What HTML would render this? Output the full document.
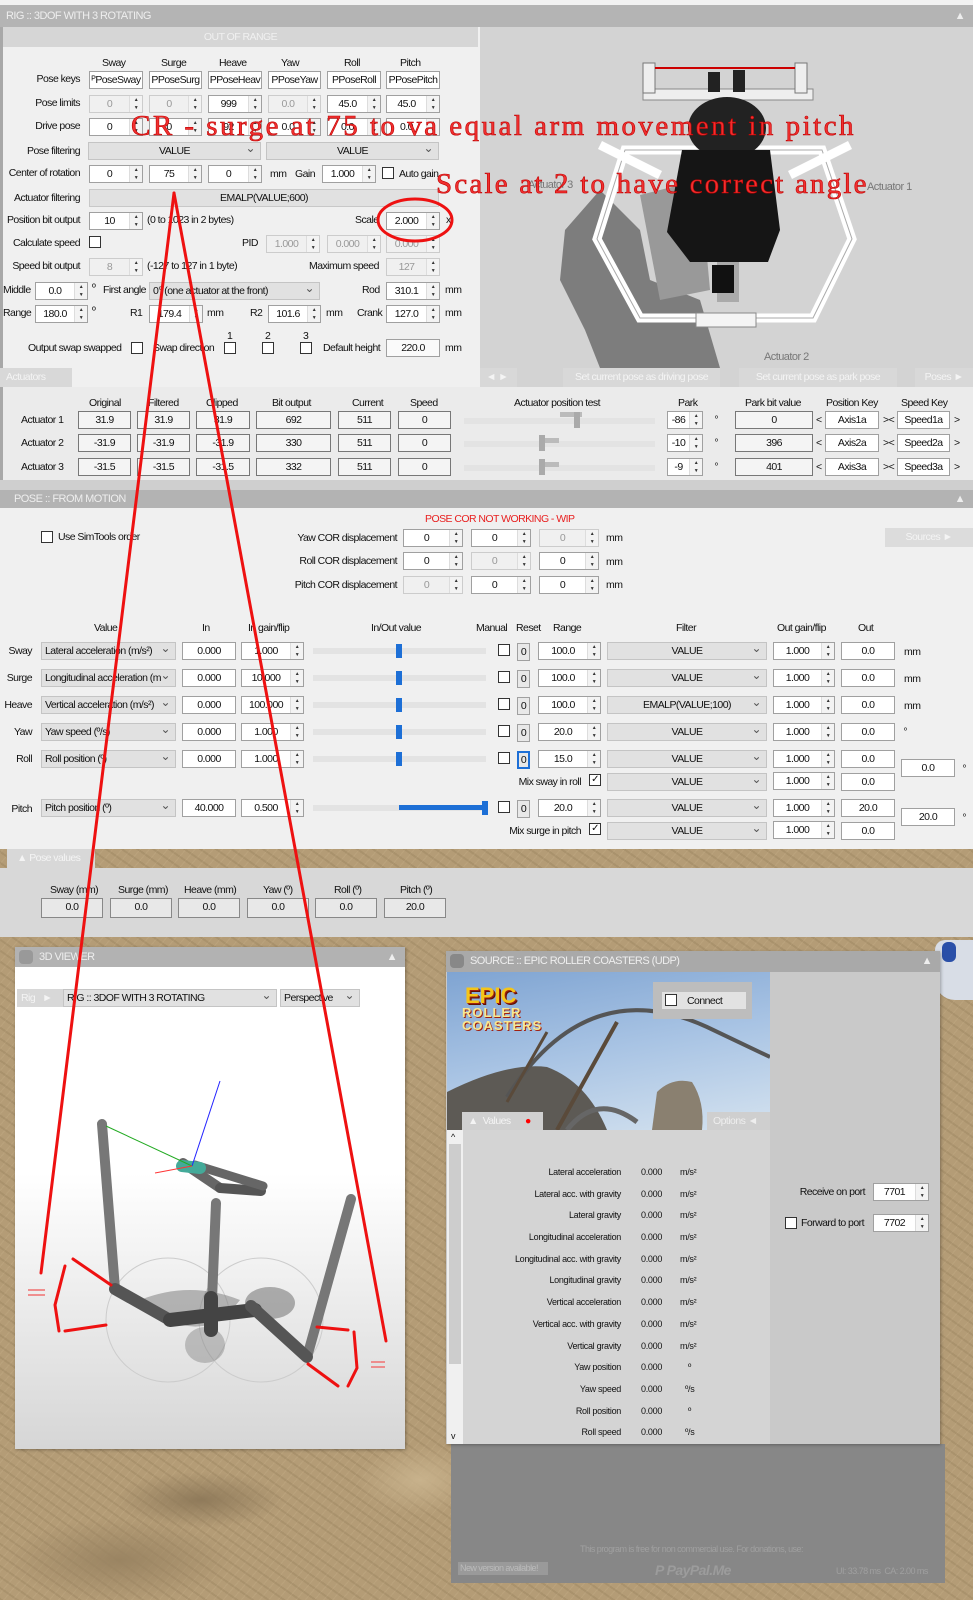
<!DOCTYPE html>
<html><head><meta charset="utf-8">
<style>
*{box-sizing:border-box;margin:0;padding:0}
body{width:973px;height:1600px;position:relative;overflow:hidden;font-family:"Liberation Sans",sans-serif;font-size:10.5px;color:#111;letter-spacing:-0.55px;
background:#b49c76;
background-image:radial-gradient(ellipse 120px 40px at 200px 1500px,#8f7a5a 0,transparent 70%),radial-gradient(ellipse 160px 60px at 120px 1560px,#9a8462 0,transparent 70%),radial-gradient(ellipse 90px 50px at 420px 1480px,#c8b28c 0,transparent 70%),repeating-linear-gradient(35deg,rgba(90,70,40,.12) 0 2px,transparent 2px 9px),repeating-linear-gradient(-50deg,rgba(230,210,170,.12) 0 1px,transparent 1px 7px);}
.a{position:absolute}
.l{position:absolute;white-space:nowrap;line-height:13px}
.r{position:absolute;white-space:nowrap;line-height:13px;text-align:right}
.tb{position:absolute;background:#fff;border:1px solid #a0a0a0;height:18px;line-height:16px;text-align:center;white-space:nowrap;overflow:hidden}
.sp{padding-right:13px}
.sp:after{content:"▲\A▼";white-space:pre;position:absolute;right:0;top:0;width:12px;height:16px;border-left:1px solid #ddd;background:#f3f3f3;font-size:5px;line-height:8px;text-align:center;color:#333}
.dis{background:#f0f0f0;color:#999;border-color:#ccc}
.dd{position:absolute;background:#e1e1e1;border:1px solid #c4c4c4;height:18px;line-height:16px;text-align:center;white-space:nowrap;overflow:hidden}
.dd:after{content:"⌄";position:absolute;right:5px;top:-3px;font-size:12px;color:#555}
.ddl{text-align:left;padding-left:3px}
.cb{position:absolute;width:12px;height:12px;border:1px solid #333;background:#fff}
.bar{position:absolute;background:#b3b3b3;color:#eee;font-size:11px;line-height:18px}
.sl{position:absolute;height:6px;background:#e3e3e3}
.th{position:absolute;width:6px;height:14px;background:#1d6fd6}
.tab{position:absolute;background:#d8d8d8;color:#f4f4f4;line-height:18px;padding-left:6px}
</style></head><body>

<!-- RIG panel -->
<div class="a" style="left:0;top:0;width:973px;height:5px;background:#f2f2f2"></div>
<div class="bar" style="left:0;top:5px;width:973px;height:22px;background:#b4b4b4;line-height:22px;padding-left:6px">RIG :: 3DOF WITH 3 ROTATING<span style="position:absolute;right:8px">▲</span></div>
<div class="a" style="left:0;top:27px;width:480px;height:341px;background:#f0f0f0"></div>
<div class="a" style="left:0;top:27px;width:3px;height:460px;background:#a8a8a8"></div>
<div class="a" style="left:3px;top:27px;width:475px;height:20px;background:#d6d6d6;color:#f0f0f0;text-align:center;line-height:20px">OUT OF RANGE</div>

<div class="l" style="left:102px;top:57px">Sway</div><div class="l" style="left:161px;top:57px">Surge</div><div class="l" style="left:219px;top:57px">Heave</div><div class="l" style="left:281px;top:57px">Yaw</div><div class="l" style="left:344px;top:57px">Roll</div><div class="l" style="left:400px;top:57px">Pitch</div>

<div class="r" style="right:893px;top:73px">Pose keys</div>
<div class="tb" style="left:89px;top:71px;width:54px">ᴾPoseSway</div><div class="tb" style="left:149px;top:71px;width:53px">PPoseSurg</div><div class="tb" style="left:208px;top:71px;width:54px">PPoseHeav</div><div class="tb" style="left:268px;top:71px;width:53px">PPoseYaw</div><div class="tb" style="left:327px;top:71px;width:54px">PPoseRoll</div><div class="tb" style="left:386px;top:71px;width:54px">PPosePitch</div>

<div class="r" style="right:893px;top:97px">Pose limits</div>
<div class="tb sp dis" style="left:89px;top:95px;width:54px">0</div><div class="tb sp dis" style="left:149px;top:95px;width:53px">0</div><div class="tb sp" style="left:208px;top:95px;width:54px">999</div><div class="tb sp dis" style="left:268px;top:95px;width:53px">0.0</div><div class="tb sp" style="left:327px;top:95px;width:54px">45.0</div><div class="tb sp" style="left:386px;top:95px;width:54px">45.0</div>

<div class="r" style="right:893px;top:120px">Drive pose</div>
<div class="tb sp" style="left:89px;top:118px;width:54px">0</div><div class="tb sp" style="left:149px;top:118px;width:53px">0</div><div class="tb sp" style="left:208px;top:118px;width:54px">92</div><div class="tb sp" style="left:268px;top:118px;width:53px">0.0</div><div class="tb sp" style="left:327px;top:118px;width:54px">0.0</div><div class="tb sp" style="left:386px;top:118px;width:54px">0.0</div>

<div class="r" style="right:893px;top:145px">Pose filtering</div>
<div class="dd" style="left:88px;top:142px;width:173px">VALUE</div><div class="dd" style="left:266px;top:142px;width:173px">VALUE</div>

<div class="r" style="right:893px;top:167px">Center of rotation</div>
<div class="tb sp" style="left:89px;top:165px;width:54px">0</div><div class="tb sp" style="left:149px;top:165px;width:53px">75</div><div class="tb sp" style="left:208px;top:165px;width:54px">0</div>
<div class="l" style="left:270px;top:168px">mm</div><div class="l" style="left:295px;top:168px">Gain</div>
<div class="tb sp" style="left:322px;top:165px;width:54px">1.000</div><div class="cb" style="left:382px;top:167px"></div><div class="l" style="left:399px;top:168px">Auto gain</div>

<div class="r" style="right:893px;top:192px">Actuator filtering</div>
<div class="a" style="left:89px;top:189px;width:350px;height:18px;background:#e1e1e1;border:1px solid #c8c8c8;text-align:center;line-height:16px">EMALP(VALUE;600)</div>

<div class="r" style="right:893px;top:214px">Position bit output</div>
<div class="tb sp" style="left:89px;top:212px;width:54px">10</div><div class="l" style="left:147px;top:214px">(0 to 1023 in 2 bytes)</div>
<div class="l" style="left:355px;top:214px">Scale</div><div class="tb sp" style="left:386px;top:212px;width:54px">2.000</div><div class="l" style="left:446px;top:214px">x</div>

<div class="r" style="right:893px;top:237px">Calculate speed</div><div class="cb" style="left:89px;top:236px"></div>
<div class="l" style="left:242px;top:237px">PID</div>
<div class="tb sp dis" style="left:266px;top:235px;width:54px">1.000</div><div class="tb sp dis" style="left:327px;top:235px;width:54px">0.000</div><div class="tb sp dis" style="left:386px;top:235px;width:54px">0.000</div>

<div class="r" style="right:893px;top:260px">Speed bit output</div>
<div class="tb sp dis" style="left:89px;top:258px;width:54px">8</div><div class="l" style="left:147px;top:260px">(-127 to 127 in 1 byte)</div>
<div class="l" style="left:309px;top:260px">Maximum speed</div><div class="tb sp dis" style="left:386px;top:258px;width:54px">127</div>

<div class="l" style="left:3px;top:284px">Middle</div><div class="tb sp" style="left:35px;top:282px;width:53px">0.0</div><div class="l" style="left:92px;top:282px">º</div>
<div class="l" style="left:103px;top:284px">First angle</div><div class="dd ddl" style="left:149px;top:282px;width:171px">0° (one actuator at the front)</div>
<div class="l" style="left:362px;top:284px">Rod</div><div class="tb sp" style="left:386px;top:282px;width:54px">310.1</div><div class="l" style="left:445px;top:284px">mm</div>

<div class="l" style="left:3px;top:307px">Range</div><div class="tb sp" style="left:35px;top:305px;width:53px">180.0</div><div class="l" style="left:92px;top:305px">º</div>
<div class="l" style="left:130px;top:307px">R1</div><div class="tb sp" style="left:149px;top:305px;width:54px">179.4</div><div class="l" style="left:207px;top:307px">mm</div>
<div class="l" style="left:250px;top:307px">R2</div><div class="tb sp" style="left:268px;top:305px;width:53px">101.6</div><div class="l" style="left:326px;top:307px">mm</div>
<div class="l" style="left:357px;top:307px">Crank</div><div class="tb sp" style="left:386px;top:305px;width:54px">127.0</div><div class="l" style="left:445px;top:307px">mm</div>

<div class="l" style="left:227px;top:330px">1</div><div class="l" style="left:265px;top:330px">2</div><div class="l" style="left:303px;top:330px">3</div>
<div class="l" style="left:28px;top:342px">Output swap swapped</div><div class="cb" style="left:131px;top:342px"></div>
<div class="l" style="left:153px;top:342px">Swap direction</div><div class="cb" style="left:224px;top:342px"></div><div class="cb" style="left:262px;top:342px"></div><div class="cb" style="left:300px;top:342px"></div>
<div class="l" style="left:323px;top:342px">Default height</div><div class="tb" style="left:386px;top:339px;width:54px;background:#fafafa">220.0</div><div class="l" style="left:445px;top:342px">mm</div>

<!-- 3D render -->
<div class="a" style="left:480px;top:27px;width:493px;height:341px;background:#d3d3d3;overflow:hidden">
<svg width="493" height="341" viewBox="480 27 493 341">
<path d="M600 190 L565 230 L560 280 L585 330 L600 368 L720 368 L700 300 L650 280 L640 230 Z" fill="#7d7d7d"/>
<path d="M640 195 L700 180 L710 290 L660 300 Z" fill="#999"/>
<polygon points="625,150 822,150 852,239 813,318 640,318 597,239" fill="none" stroke="#fff" stroke-width="9"/>
<polygon points="625,150 822,150 852,239 813,318 640,318 597,239" fill="none" stroke="#aaa" stroke-width="1"/>
<rect x="643" y="89" width="170" height="11" fill="#eee" stroke="#888"/>
<rect x="643" y="63" width="12" height="30" fill="#eee" stroke="#777"/><rect x="795" y="63" width="12" height="30" fill="#eee" stroke="#777"/>
<line x1="655" y1="68" x2="795" y2="68" stroke="#c00" stroke-width="2"/>
<rect x="708" y="72" width="12" height="20" fill="#222"/><rect x="733" y="70" width="12" height="22" fill="#222"/>
<line x1="600" y1="145" x2="660" y2="175" stroke="#fff" stroke-width="9"/><line x1="850" y1="145" x2="790" y2="175" stroke="#fff" stroke-width="9"/>
<ellipse cx="727" cy="128" rx="39" ry="31" fill="#222"/>
<path d="M682 150 L770 150 L780 230 L768 262 L690 262 L667 232 Z" fill="#151515"/>
<rect x="717" y="262" width="22" height="40" fill="#aaa"/>
<rect x="712" y="265" width="22" height="28" fill="#111"/>
<rect x="696" y="313" width="60" height="14" fill="#f4f4f4" stroke="#888"/>
<text x="867" y="190" fill="#777" font-size="11" font-family="Liberation Sans">Actuator 1</text>
<text x="764" y="360" fill="#777" font-size="11" font-family="Liberation Sans">Actuator 2</text>
<text x="528" y="188" fill="#777" font-size="11" font-family="Liberation Sans">Actuator 3</text>
</svg></div>

<!-- Actuators bar -->
<div class="a" style="left:0;top:368px;width:480px;height:19px;background:#f0f0f0"></div>
<div class="tab" style="left:0;top:368px;width:72px;height:19px">Actuators</div>
<div class="a" style="left:480px;top:368px;width:493px;height:19px;background:#d3d3d3"></div>
<div class="tab" style="left:480px;top:368px;width:37px;height:19px">◄ ►</div>
<div class="tab" style="left:563px;top:368px;width:157px;height:19px;text-align:center;padding:0">Set current pose as driving pose</div>
<div class="tab" style="left:739px;top:368px;width:158px;height:19px;text-align:center;padding:0">Set current pose as park pose</div>
<div class="tab" style="left:915px;top:368px;width:58px;height:19px;text-align:center;padding:0">Poses ►</div>
<div class="a" style="left:3px;top:387px;width:970px;height:93px;background:#ebebeb"></div>

<div class="l" style="left:89px;top:397px">Original</div><div class="l" style="left:148px;top:397px">Filtered</div><div class="l" style="left:206px;top:397px">Clipped</div><div class="l" style="left:272px;top:397px">Bit output</div><div class="l" style="left:352px;top:397px">Current</div><div class="l" style="left:410px;top:397px">Speed</div>
<div class="l" style="left:514px;top:397px">Actuator position test</div><div class="l" style="left:678px;top:397px">Park</div><div class="l" style="left:745px;top:397px">Park bit value</div><div class="l" style="left:826px;top:397px">Position Key</div><div class="l" style="left:901px;top:397px">Speed Key</div>

<div class="l" style="left:21px;top:414px">Actuator 1</div><div class="l" style="left:21px;top:437px">Actuator 2</div><div class="l" style="left:21px;top:461px">Actuator 3</div>
<div class="tb" style="left:78px;top:411px;width:53px;background:#f4f4f4;border-color:#777">31.9</div><div class="tb" style="left:137px;top:411px;width:53px;background:#f4f4f4;border-color:#777">31.9</div><div class="tb" style="left:196px;top:411px;width:54px;background:#f4f4f4;border-color:#777">31.9</div><div class="tb" style="left:256px;top:411px;width:75px;background:#f4f4f4;border-color:#777">692</div><div class="tb" style="left:338px;top:411px;width:53px;background:#f4f4f4;border-color:#777">511</div><div class="tb" style="left:398px;top:411px;width:53px;background:#f4f4f4;border-color:#777">0</div>
<div class="tb" style="left:78px;top:434px;width:53px;background:#f4f4f4;border-color:#777">-31.9</div><div class="tb" style="left:137px;top:434px;width:53px;background:#f4f4f4;border-color:#777">-31.9</div><div class="tb" style="left:196px;top:434px;width:54px;background:#f4f4f4;border-color:#777">-31.9</div><div class="tb" style="left:256px;top:434px;width:75px;background:#f4f4f4;border-color:#777">330</div><div class="tb" style="left:338px;top:434px;width:53px;background:#f4f4f4;border-color:#777">511</div><div class="tb" style="left:398px;top:434px;width:53px;background:#f4f4f4;border-color:#777">0</div>
<div class="tb" style="left:78px;top:458px;width:53px;background:#f4f4f4;border-color:#777">-31.5</div><div class="tb" style="left:137px;top:458px;width:53px;background:#f4f4f4;border-color:#777">-31.5</div><div class="tb" style="left:196px;top:458px;width:54px;background:#f4f4f4;border-color:#777">-31.5</div><div class="tb" style="left:256px;top:458px;width:75px;background:#f4f4f4;border-color:#777">332</div><div class="tb" style="left:338px;top:458px;width:53px;background:#f4f4f4;border-color:#777">511</div><div class="tb" style="left:398px;top:458px;width:53px;background:#f4f4f4;border-color:#777">0</div>
<div class="sl" style="left:464px;top:418px;width:191px"></div><div class="a" style="left:560px;top:412px;width:22px;height:5px;background:#bbb"></div><div class="a" style="left:574px;top:412px;width:6px;height:16px;background:#aaa"></div>
<div class="sl" style="left:464px;top:441px;width:191px"></div><div class="a" style="left:539px;top:438px;width:20px;height:5px;background:#bbb"></div><div class="a" style="left:539px;top:435px;width:6px;height:16px;background:#aaa"></div>
<div class="sl" style="left:464px;top:465px;width:191px"></div><div class="a" style="left:539px;top:462px;width:20px;height:5px;background:#bbb"></div><div class="a" style="left:539px;top:459px;width:6px;height:16px;background:#aaa"></div>
<div class="tb sp" style="left:667px;top:411px;width:36px">-86</div><div class="l" style="left:715px;top:412px;font-size:8px">º</div><div class="tb sp" style="left:667px;top:434px;width:36px">-10</div><div class="l" style="left:715px;top:435px;font-size:8px">º</div><div class="tb sp" style="left:667px;top:458px;width:36px">-9</div><div class="l" style="left:715px;top:459px;font-size:8px">º</div>
<div class="tb" style="left:735px;top:411px;width:78px;background:#f4f4f4;border-color:#777">0</div><div class="tb" style="left:735px;top:434px;width:78px;background:#f4f4f4;border-color:#777">396</div><div class="tb" style="left:735px;top:458px;width:78px;background:#f4f4f4;border-color:#777">401</div>
<div class="l" style="left:816px;top:414px">&lt;</div><div class="l" style="left:816px;top:437px">&lt;</div><div class="l" style="left:816px;top:461px">&lt;</div>
<div class="tb" style="left:825px;top:411px;width:54px">Axis1a</div><div class="tb" style="left:825px;top:434px;width:54px">Axis2a</div><div class="tb" style="left:825px;top:458px;width:54px">Axis3a</div>
<div class="l" style="left:883px;top:414px">&gt;&lt;</div><div class="l" style="left:883px;top:437px">&gt;&lt;</div><div class="l" style="left:883px;top:461px">&gt;&lt;</div>
<div class="tb" style="left:897px;top:411px;width:53px">Speed1a</div><div class="tb" style="left:897px;top:434px;width:53px">Speed2a</div><div class="tb" style="left:897px;top:458px;width:53px">Speed3a</div>
<div class="l" style="left:954px;top:414px">&gt;</div><div class="l" style="left:954px;top:437px">&gt;</div><div class="l" style="left:954px;top:461px">&gt;</div>
<div class="a" style="left:0;top:480px;width:973px;height:10px;background:#cfcfcf"></div>

<!-- POSE -->
<div class="bar" style="left:0;top:490px;width:973px;height:18px;padding-left:14px">POSE :: FROM MOTION<span style="position:absolute;right:8px">▲</span></div>
<div class="a" style="left:0;top:508px;width:973px;height:341px;background:#f0f0f0"></div>
<div class="l" style="left:425px;top:513px;color:#e82020">POSE COR NOT WORKING - WIP</div>
<div class="cb" style="left:41px;top:531px"></div><div class="l" style="left:58px;top:531px">Use SimTools order</div>
<div class="a" style="left:885px;top:528px;width:88px;height:19px;background:#dcdcdc;color:#f4f4f4;text-align:center;line-height:19px">Sources ►</div>
<div class="r" style="right:576px;top:532px">Yaw COR displacement</div><div class="r" style="right:576px;top:555px">Roll COR displacement</div><div class="r" style="right:576px;top:579px">Pitch COR displacement</div>
<div class="tb sp" style="left:403px;top:529px;width:60px">0</div><div class="tb sp" style="left:471px;top:529px;width:60px">0</div><div class="tb sp dis" style="left:539px;top:529px;width:60px">0</div><div class="l" style="left:606px;top:532px">mm</div>
<div class="tb sp" style="left:403px;top:552px;width:60px">0</div><div class="tb sp dis" style="left:471px;top:552px;width:60px">0</div><div class="tb sp" style="left:539px;top:552px;width:60px">0</div><div class="l" style="left:606px;top:556px">mm</div>
<div class="tb sp dis" style="left:403px;top:576px;width:60px">0</div><div class="tb sp" style="left:471px;top:576px;width:60px">0</div><div class="tb sp" style="left:539px;top:576px;width:60px">0</div><div class="l" style="left:606px;top:579px">mm</div>

<div class="l" style="left:94px;top:622px">Value</div><div class="l" style="left:202px;top:622px">In</div><div class="l" style="left:248px;top:622px">In gain/flip</div><div class="l" style="left:371px;top:622px">In/Out value</div><div class="l" style="left:476px;top:622px">Manual</div><div class="l" style="left:516px;top:622px">Reset</div><div class="l" style="left:553px;top:622px">Range</div><div class="l" style="left:676px;top:622px">Filter</div><div class="l" style="left:777px;top:622px">Out gain/flip</div><div class="l" style="left:858px;top:622px">Out</div>

<!-- rows -->
<div class="r" style="right:941px;top:645px">Sway</div><div class="dd ddl" style="left:41px;top:642px;width:135px">Lateral acceleration (m/s²)</div><div class="tb" style="left:182px;top:642px;width:54px">0.000</div><div class="tb sp" style="left:241px;top:642px;width:63px">1.000</div><div class="sl" style="left:313px;top:648px;width:173px"></div><div class="th" style="left:396px;top:644px"></div><div class="cb" style="left:498px;top:644px"></div><div class="tb" style="left:517px;top:643px;width:13px;background:#e8e8e8">0</div><div class="tb sp" style="left:538px;top:642px;width:63px">100.0</div><div class="dd" style="left:607px;top:642px;width:160px">VALUE</div><div class="tb sp" style="left:773px;top:642px;width:62px">1.000</div><div class="tb" style="left:841px;top:642px;width:54px">0.0</div><div class="l" style="left:904px;top:646px">mm</div>

<div class="r" style="right:941px;top:672px">Surge</div><div class="dd ddl" style="left:41px;top:669px;width:135px">Longitudinal acceleration (m</div><div class="tb" style="left:182px;top:669px;width:54px">0.000</div><div class="tb sp" style="left:241px;top:669px;width:63px">10.000</div><div class="sl" style="left:313px;top:675px;width:173px"></div><div class="th" style="left:396px;top:671px"></div><div class="cb" style="left:498px;top:671px"></div><div class="tb" style="left:517px;top:670px;width:13px;background:#e8e8e8">0</div><div class="tb sp" style="left:538px;top:669px;width:63px">100.0</div><div class="dd" style="left:607px;top:669px;width:160px">VALUE</div><div class="tb sp" style="left:773px;top:669px;width:62px">1.000</div><div class="tb" style="left:841px;top:669px;width:54px">0.0</div><div class="l" style="left:904px;top:673px">mm</div>

<div class="r" style="right:941px;top:699px">Heave</div><div class="dd ddl" style="left:41px;top:696px;width:135px">Vertical acceleration (m/s²)</div><div class="tb" style="left:182px;top:696px;width:54px">0.000</div><div class="tb sp" style="left:241px;top:696px;width:63px">100.000</div><div class="sl" style="left:313px;top:702px;width:173px"></div><div class="th" style="left:396px;top:698px"></div><div class="cb" style="left:498px;top:698px"></div><div class="tb" style="left:517px;top:697px;width:13px;background:#e8e8e8">0</div><div class="tb sp" style="left:538px;top:696px;width:63px">100.0</div><div class="dd" style="left:607px;top:696px;width:160px">EMALP(VALUE;100)</div><div class="tb sp" style="left:773px;top:696px;width:62px">1.000</div><div class="tb" style="left:841px;top:696px;width:54px">0.0</div><div class="l" style="left:904px;top:700px">mm</div>

<div class="r" style="right:941px;top:726px">Yaw</div><div class="dd ddl" style="left:41px;top:723px;width:135px">Yaw speed (º/s)</div><div class="tb" style="left:182px;top:723px;width:54px">0.000</div><div class="tb sp" style="left:241px;top:723px;width:63px">1.000</div><div class="sl" style="left:313px;top:729px;width:173px"></div><div class="th" style="left:396px;top:725px"></div><div class="cb" style="left:498px;top:725px"></div><div class="tb" style="left:517px;top:724px;width:13px;background:#e8e8e8">0</div><div class="tb sp" style="left:538px;top:723px;width:63px">20.0</div><div class="dd" style="left:607px;top:723px;width:160px">VALUE</div><div class="tb sp" style="left:773px;top:723px;width:62px">1.000</div><div class="tb" style="left:841px;top:723px;width:54px">0.0</div><div class="l" style="left:904px;top:724px;font-size:8px">º</div>

<div class="r" style="right:941px;top:753px">Roll</div><div class="dd ddl" style="left:41px;top:750px;width:135px">Roll position (º)</div><div class="tb" style="left:182px;top:750px;width:54px">0.000</div><div class="tb sp" style="left:241px;top:750px;width:63px">1.000</div><div class="sl" style="left:313px;top:756px;width:173px"></div><div class="th" style="left:396px;top:752px"></div><div class="cb" style="left:498px;top:752px"></div><div class="tb" style="left:517px;top:751px;width:13px;background:#e8e8e8;border:2px solid #1d6fd6;line-height:14px">0</div><div class="tb sp" style="left:538px;top:750px;width:63px">15.0</div><div class="dd" style="left:607px;top:750px;width:160px">VALUE</div><div class="tb sp" style="left:773px;top:750px;width:62px">1.000</div><div class="tb" style="left:841px;top:750px;width:54px">0.0</div>

<div class="r" style="right:392px;top:776px">Mix sway in roll</div><div class="cb" style="left:589px;top:774px;text-align:center;line-height:10px;font-size:10px">✓</div><div class="dd" style="left:607px;top:773px;width:160px">VALUE</div><div class="tb sp" style="left:773px;top:772px;width:62px">1.000</div><div class="tb" style="left:841px;top:773px;width:54px">0.0</div>
<div class="tb" style="left:901px;top:759px;width:54px">0.0</div><div class="l" style="left:963px;top:761px;font-size:8px">º</div>

<div class="r" style="right:941px;top:803px">Pitch</div><div class="dd ddl" style="left:41px;top:799px;width:135px">Pitch position (º)</div><div class="tb" style="left:182px;top:799px;width:54px">40.000</div><div class="tb sp" style="left:241px;top:799px;width:63px">0.500</div><div class="sl" style="left:313px;top:805px;width:173px"></div><div class="a" style="left:399px;top:805px;width:86px;height:5px;background:#1d6fd6"></div><div class="th" style="left:482px;top:801px"></div><div class="cb" style="left:498px;top:801px"></div><div class="tb" style="left:517px;top:800px;width:13px;background:#e8e8e8">0</div><div class="tb sp" style="left:538px;top:799px;width:63px">20.0</div><div class="dd" style="left:607px;top:799px;width:160px">VALUE</div><div class="tb sp" style="left:773px;top:799px;width:62px">1.000</div><div class="tb" style="left:841px;top:799px;width:54px">20.0</div>
<div class="r" style="right:392px;top:825px">Mix surge in pitch</div><div class="cb" style="left:589px;top:823px;text-align:center;line-height:10px;font-size:10px">✓</div><div class="dd" style="left:607px;top:822px;width:160px">VALUE</div><div class="tb sp" style="left:773px;top:821px;width:62px">1.000</div><div class="tb" style="left:841px;top:822px;width:54px">0.0</div>
<div class="tb" style="left:901px;top:808px;width:54px">20.0</div><div class="l" style="left:963px;top:810px;font-size:8px">º</div>

<div class="tab" style="left:7px;top:849px;width:88px;height:19px;padding-left:10px">▲ Pose values</div>
<div class="a" style="left:0;top:868px;width:973px;height:69px;background:#d8d8d8"></div>
<div class="l" style="left:50px;top:884px">Sway (mm)</div><div class="l" style="left:118px;top:884px">Surge (mm)</div><div class="l" style="left:184px;top:884px">Heave (mm)</div><div class="l" style="left:263px;top:884px">Yaw (º)</div><div class="l" style="left:334px;top:884px">Roll (º)</div><div class="l" style="left:400px;top:884px">Pitch (º)</div>
<div class="tb" style="left:41px;top:898px;width:62px;background:#e8e8e8;border-color:#888;height:20px">0.0</div><div class="tb" style="left:110px;top:898px;width:62px;background:#e8e8e8;border-color:#888;height:20px">0.0</div><div class="tb" style="left:178px;top:898px;width:62px;background:#e8e8e8;border-color:#888;height:20px">0.0</div><div class="tb" style="left:247px;top:898px;width:62px;background:#e8e8e8;border-color:#888;height:20px">0.0</div><div class="tb" style="left:315px;top:898px;width:62px;background:#e8e8e8;border-color:#888;height:20px">0.0</div><div class="tb" style="left:384px;top:898px;width:62px;background:#e8e8e8;border-color:#888;height:20px">20.0</div>

<!-- blue blob top right -->
<div class="a" style="left:935px;top:940px;width:38px;height:60px;background:#d8dde6;border-radius:10px 0 0 20px"></div>
<div class="a" style="left:942px;top:942px;width:14px;height:20px;background:#2a4fa8;border-radius:6px"></div>

<!-- 3D viewer -->
<div class="a" style="left:15px;top:947px;width:390px;height:502px;background:linear-gradient(#fff 0,#fff 45%,#d6d6d6 100%);box-shadow:1px 1px 3px rgba(0,0,0,.3)"></div>
<div class="bar" style="left:15px;top:947px;width:390px;height:20px;background:#b2b2b2;padding-left:24px;line-height:20px">3D VIEWER<span style="position:absolute;right:8px">▲</span></div>
<div class="a" style="left:19px;top:950px;width:14px;height:14px;background:#999;border-radius:4px"></div>
<div class="tab" style="left:17px;top:989px;width:46px;height:18px;padding-left:4px">Rig &nbsp; ►</div>
<div class="dd ddl" style="left:63px;top:989px;width:214px">RIG :: 3DOF WITH 3 ROTATING</div>
<div class="dd ddl" style="left:280px;top:989px;width:80px">Perspective</div>
<svg class="a" style="left:0;top:0" width="973" height="1600">
<circle cx="168" cy="1320" r="62" fill="none" stroke="#ccc"/><circle cx="261" cy="1320" r="62" fill="none" stroke="#ccc"/>
<g stroke-linecap="round" fill="none">
<path d="M140 1300 Q190 1280 240 1300 Q210 1340 170 1320 Z" fill="#777" fill-opacity=".5" stroke="none"/>
<ellipse cx="270" cy="1303" rx="25" ry="16" fill="#666" fill-opacity=".5"/>
<ellipse cx="205" cy="1345" rx="20" ry="18" fill="#777" fill-opacity=".4"/>
<line x1="102" y1="1124" x2="115" y2="1289" stroke="#777" stroke-width="10"/>
<line x1="216" y1="1203" x2="211" y2="1323" stroke="#777" stroke-width="10"/>
<line x1="351" y1="1199" x2="307" y2="1357" stroke="#777" stroke-width="10"/>
<line x1="115" y1="1289" x2="170" y2="1320" stroke="#555" stroke-width="12"/>
<line x1="170" y1="1320" x2="255" y2="1310" stroke="#444" stroke-width="14"/>
<line x1="211" y1="1298" x2="211" y2="1330" stroke="#444" stroke-width="14"/>
<line x1="251" y1="1306" x2="307" y2="1357" stroke="#555" stroke-width="12"/>
<line x1="183" y1="1163" x2="220" y2="1188" stroke="#666" stroke-width="10"/>
<line x1="220" y1="1188" x2="261" y2="1191" stroke="#555" stroke-width="10"/>
<line x1="195" y1="1165" x2="263" y2="1186" stroke="#666" stroke-width="9"/>
<line x1="182" y1="1166" x2="200" y2="1168" stroke="#4a9" stroke-width="12"/>
</g>
<line x1="192" y1="1166" x2="220" y2="1081" stroke="#22f" stroke-width="1"/>
<line x1="192" y1="1166" x2="106" y2="1126" stroke="#2a2" stroke-width="1"/>
<line x1="192" y1="1166" x2="155" y2="1173" stroke="#f33" stroke-width="1"/>
<!-- red annotations -->
<g stroke="#ee1111" stroke-width="3" fill="none" stroke-linecap="round">
<line x1="174" y1="193" x2="41" y2="1273"/>
<line x1="174" y1="193" x2="386" y2="1341"/>
<line x1="73" y1="1259" x2="111" y2="1285"/>
<polyline points="65,1266 55,1305 59,1331"/>
<line x1="65" y1="1331" x2="106" y2="1325"/>
<line x1="317" y1="1327" x2="348" y2="1330"/>
<polyline points="354,1332 357,1368 348,1386"/>
<line x1="308" y1="1364" x2="338" y2="1386"/>
<ellipse cx="415" cy="220" rx="37" ry="21" stroke-width="3"/>
</g>
<g stroke="#f07070" stroke-width="1.5"><line x1="28" y1="1290" x2="45" y2="1290"/><line x1="28" y1="1295" x2="45" y2="1295"/><line x1="371" y1="1362" x2="385" y2="1362"/><line x1="371" y1="1367" x2="385" y2="1367"/></g>
<g font-family="Liberation Serif" font-size="29" fill="#f03030" stroke="#c00000" stroke-width=".6">
<text x="131" y="135" textLength="722" lengthAdjust="spacing">CR - surge at 75 to va equal arm movement in pitch</text>
<text x="436" y="193" textLength="430" lengthAdjust="spacing">Scale at 2 to have correct angle</text>
</g>
</svg>

<!-- SOURCE window -->
<div class="a" style="left:451px;top:1444px;width:494px;height:139px;background:#878787"></div>
<div class="a" style="left:446px;top:951px;width:494px;height:493px;background:#c9c9c9;box-shadow:1px 1px 3px rgba(0,0,0,.3)"></div>
<div class="bar" style="left:446px;top:951px;width:494px;height:21px;background:#a9a9a9;padding-left:24px;line-height:21px">SOURCE :: EPIC ROLLER COASTERS (UDP)<span style="position:absolute;right:8px">▲</span></div>
<div class="a" style="left:450px;top:954px;width:14px;height:14px;background:#888;border-radius:4px"></div>
<div class="a" style="left:447px;top:972px;width:323px;height:158px;overflow:hidden;background:linear-gradient(170deg,#7fa4d2 0,#a9c4e4 50%,#d4e2ef 100%)">
<svg width="323" height="158">
<path d="M0 120 Q60 90 100 95 Q140 110 160 158 L0 158 Z" fill="#5d5a55"/>
<path d="M210 120 Q225 105 245 110 Q258 130 255 158 L205 158 Z" fill="#8a8070"/>
<path d="M60 125 Q140 0 260 55 L323 85" stroke="#555" stroke-width="4" fill="none"/>
<line x1="170" y1="50" x2="110" y2="158" stroke="#5a4a3a" stroke-width="4"/>
<line x1="100" y1="60" x2="60" y2="130" stroke="#5a4a3a" stroke-width="3"/>
<path d="M120 158 Q150 120 190 150" stroke="#666" stroke-width="5" fill="none"/>
</svg>
<div class="a" style="left:18px;top:15px;font:bold 22px/18px 'Liberation Sans',sans-serif;color:#f5c518;text-shadow:1px 1px 0 #a02010,2px 2px 0 #601000;letter-spacing:0">EPIC</div>
<div class="a" style="left:15px;top:34px;font:bold 13px/13px 'Liberation Sans',sans-serif;color:#f8e890;text-shadow:1px 1px 0 #a02010;letter-spacing:1px">ROLLER<br>COASTERS</div>
</div>
<div class="a" style="left:653px;top:982px;width:99px;height:37px;background:#bdbdbd"></div>
<div class="a" style="left:662px;top:992px;width:84px;height:17px;background:#e2e2e2"></div>
<div class="cb" style="left:665px;top:994px"></div><div class="l" style="left:687px;top:995px">Connect</div>
<div class="tab" style="left:462px;top:1112px;width:81px;height:18px;background:#d0d0d0">▲ &nbsp;Values <span style="color:#f00;margin-left:12px">●</span></div>
<div class="tab" style="left:707px;top:1112px;width:63px;height:18px;background:#cfcfcf;color:#eee">Options ◄</div>
<div class="a" style="left:447px;top:1130px;width:16px;height:314px;background:#f0f0f0"></div>
<div class="a" style="left:449px;top:1144px;width:12px;height:220px;background:#cdcdcd"></div>
<div class="l" style="left:451px;top:1131px;font-size:9px">^</div><div class="l" style="left:451px;top:1430px;font-size:9px">v</div>
<div class="a" style="left:463px;top:1130px;width:307px;height:314px;background:#d4d4d4"></div>
<div style="position:absolute;left:463px;top:1162px;width:300px;font-size:9px;letter-spacing:-0.3px;line-height:21.7px">
<div style="position:relative;height:21.7px"><span class="r" style="right:142px;line-height:21.7px">Lateral acceleration</span><span class="l" style="left:178px;line-height:21.7px">0.000</span><span class="l" style="left:217px;line-height:21.7px">m/s²</span></div>
<div style="position:relative;height:21.7px"><span class="r" style="right:142px;line-height:21.7px">Lateral acc. with gravity</span><span class="l" style="left:178px;line-height:21.7px">0.000</span><span class="l" style="left:217px;line-height:21.7px">m/s²</span></div>
<div style="position:relative;height:21.7px"><span class="r" style="right:142px;line-height:21.7px">Lateral gravity</span><span class="l" style="left:178px;line-height:21.7px">0.000</span><span class="l" style="left:217px;line-height:21.7px">m/s²</span></div>
<div style="position:relative;height:21.7px"><span class="r" style="right:142px;line-height:21.7px">Longitudinal acceleration</span><span class="l" style="left:178px;line-height:21.7px">0.000</span><span class="l" style="left:217px;line-height:21.7px">m/s²</span></div>
<div style="position:relative;height:21.7px"><span class="r" style="right:142px;line-height:21.7px">Longitudinal acc. with gravity</span><span class="l" style="left:178px;line-height:21.7px">0.000</span><span class="l" style="left:217px;line-height:21.7px">m/s²</span></div>
<div style="position:relative;height:21.7px"><span class="r" style="right:142px;line-height:21.7px">Longitudinal gravity</span><span class="l" style="left:178px;line-height:21.7px">0.000</span><span class="l" style="left:217px;line-height:21.7px">m/s²</span></div>
<div style="position:relative;height:21.7px"><span class="r" style="right:142px;line-height:21.7px">Vertical acceleration</span><span class="l" style="left:178px;line-height:21.7px">0.000</span><span class="l" style="left:217px;line-height:21.7px">m/s²</span></div>
<div style="position:relative;height:21.7px"><span class="r" style="right:142px;line-height:21.7px">Vertical acc. with gravity</span><span class="l" style="left:178px;line-height:21.7px">0.000</span><span class="l" style="left:217px;line-height:21.7px">m/s²</span></div>
<div style="position:relative;height:21.7px"><span class="r" style="right:142px;line-height:21.7px">Vertical gravity</span><span class="l" style="left:178px;line-height:21.7px">0.000</span><span class="l" style="left:217px;line-height:21.7px">m/s²</span></div>
<div style="position:relative;height:21.7px"><span class="r" style="right:142px;line-height:21.7px">Yaw position</span><span class="l" style="left:178px;line-height:21.7px">0.000</span><span class="l" style="left:225px;line-height:21.7px">º</span></div>
<div style="position:relative;height:21.7px"><span class="r" style="right:142px;line-height:21.7px">Yaw speed</span><span class="l" style="left:178px;line-height:21.7px">0.000</span><span class="l" style="left:222px;line-height:21.7px">º/s</span></div>
<div style="position:relative;height:21.7px"><span class="r" style="right:142px;line-height:21.7px">Roll position</span><span class="l" style="left:178px;line-height:21.7px">0.000</span><span class="l" style="left:225px;line-height:21.7px">º</span></div>
<div style="position:relative;height:21.7px"><span class="r" style="right:142px;line-height:21.7px">Roll speed</span><span class="l" style="left:178px;line-height:21.7px">0.000</span><span class="l" style="left:222px;line-height:21.7px">º/s</span></div>
</div>
<div class="r" style="right:108px;top:1186px">Receive on port</div><div class="tb sp" style="left:873px;top:1183px;width:56px">7701</div>
<div class="cb" style="left:785px;top:1217px"></div><div class="l" style="left:801px;top:1217px">Forward to port</div><div class="tb sp" style="left:873px;top:1214px;width:56px">7702</div>

<div class="l" style="left:580px;top:1543px;font-size:9px;color:#a0a0a0">This program is free for non commercial use. For donations, use:</div>
<div class="a" style="left:458px;top:1562px;width:90px;height:13px;background:#9a9a9a;color:#bbb;font-size:9px;line-height:13px;padding-left:2px">New version available!</div>
<div class="l" style="left:655px;top:1562px;font:italic bold 14px 'Liberation Sans',sans-serif;color:#9c9c9c">P PayPal.Me</div>
<div class="l" style="left:836px;top:1565px;font-size:9px;color:#a0a0a0">UI: 33.78 ms &nbsp;CA: 2.00 ms</div>
</body></html>
